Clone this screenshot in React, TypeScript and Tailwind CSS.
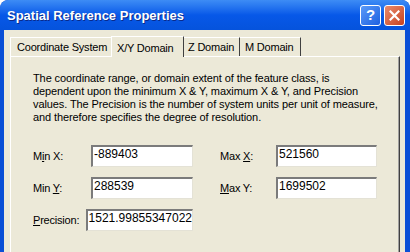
import React from "react";

const font = { fontFamily: '"Liberation Sans", Arial, sans-serif' };

function Field({ label, u, value, labelW }: { label: string; u: number; value: string; labelW: string }) {
  return (
    <div className="flex items-center h-[22px]">
      <span className={`${labelW} text-[11px] tracking-[-0.2px] text-black`}>
        {label.slice(0, u)}
        <span className="underline">{label[u]}</span>
        {label.slice(u + 1)}
      </span>
      <div className="h-[22px] bg-white border-t-2 border-l-2 border-t-[#7b7b7b] border-l-[#7b7b7b] border-b border-r border-b-[#e4e2d6] border-r-[#e4e2d6] pl-[1px] text-[12px] leading-[15px] text-black flex-1">
        {value}
      </div>
    </div>
  );
}

export default function App() {
  return (
    <div className="w-[410px] h-[252px] overflow-hidden bg-[#0a4fd6] rounded-t-[8px] flex flex-col" style={font}>
      {/* title bar */}
      <div className="h-[30px] shrink-0 rounded-t-[8px] bg-gradient-to-b from-[#3d8cf5] via-[#0758e8] to-[#0553dc] flex items-center pl-[7px] pr-[5px]">
        <span className="text-white font-bold text-[13px] [text-shadow:1px_1px_0_#0a2a8a] flex-1 pt-[1px]">
          Spatial Reference Properties
        </span>
        <div className="flex gap-[3px]">
          <div className="w-[21px] h-[21px] rounded-[3px] border border-white bg-gradient-to-br from-[#5a9af8] to-[#1d5fe0] flex items-center justify-center text-white font-bold text-[15px]">
            ?
          </div>
          <div className="w-[21px] h-[21px] rounded-[3px] border border-white bg-gradient-to-br from-[#e98a6c] to-[#c6401c] flex items-center justify-center">
            <svg width="11" height="11" viewBox="0 0 11 11">
              <path d="M1.5 1.5 L9.5 9.5 M9.5 1.5 L1.5 9.5" stroke="white" strokeWidth="2.2" strokeLinecap="square" />
            </svg>
          </div>
        </div>
      </div>

      {/* body */}
      <div className="flex-1 ml-[4px] mr-[5px] bg-[#ece9d8] pl-[6px] pr-[5px] pt-[5px] flex flex-col">
        {/* tabs */}
        <div className="flex items-end h-[21px] text-[11px] tracking-[-0.2px] text-black whitespace-nowrap">
          <div className="h-[19px] w-[101px] border-t border-l border-white flex items-center pl-[6px]">
            Coordinate System
          </div>
          <div className="h-[21px] w-[73px] border-t border-l border-white border-r border-r-[#404040] flex items-start pt-[3px] pl-[5px] relative z-10 bg-[#ece9d8] -mb-[1px]">
            X/Y Domain
          </div>
          <div className="h-[19px] w-[56px] border-t border-white border-r border-r-[#404040] flex items-center pl-[4px]">
            Z Domain
          </div>
          <div className="h-[19px] w-[61px] border-t border-white border-r border-r-[#404040] flex items-center pl-[5px]">
            M Domain
          </div>
        </div>

        {/* panel */}
        <div className="flex-1 border-t border-l border-white border-r border-r-[#404040] shadow-[inset_-1px_0_0_#a0a0a0] pl-[22px] pr-[10px] pt-[15px]">
          <p className="text-[11px] leading-[13px] tracking-[-0.1px] text-black whitespace-nowrap">
            The coordinate range, or domain extent of the feature class, is
            <br />
            dependent upon the minimum X &amp; Y, maximum X &amp; Y, and Precision
            <br />
            values. The Precision is the number of system units per unit of measure,
            <br />
            and therefore specifies the degree of resolution.
          </p>
          <div className="grid grid-cols-[160px_157px] gap-x-[27px] gap-y-[10px] mt-[21px]">
            <Field label="Min X:" u={1} value="-889403" labelW="w-[58px]" />
            <Field label="Max X:" u={4} value="521560" labelW="w-[56px]" />
            <Field label="Min Y:" u={4} value="288539" labelW="w-[58px]" />
            <Field label="Max Y:" u={0} value="1699502" labelW="w-[56px]" />
            <Field label="Precision:" u={0} value="1521.99855347022" labelW="w-[58px]" />
          </div>
        </div>
      </div>
    </div>
  );
}
